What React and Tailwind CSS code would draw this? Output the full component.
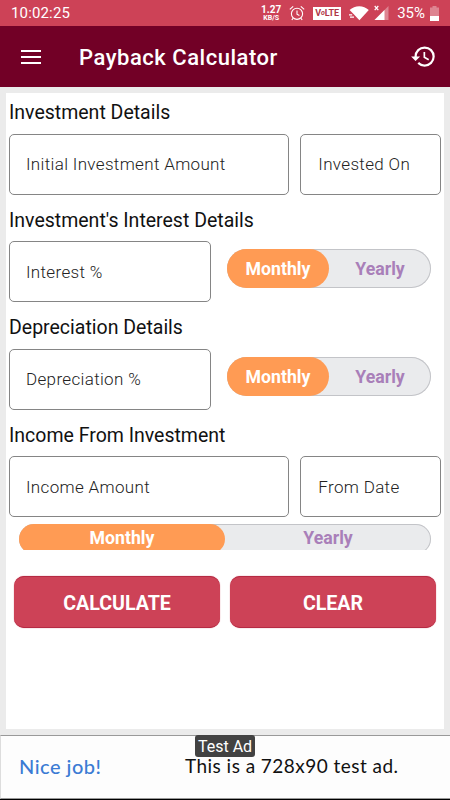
/**
 * Payback Calculator - main input screen
 */

import { useState } from 'react';

function StatusBar() {
  return (
    <div className="flex h-[26px] shrink-0 items-center bg-[#cd4257] pl-[11px] pr-[11px] text-white">
      <span className="text-[15px] leading-none tracking-[0.15px]">10:02:25</span>
      <div className="ml-auto flex items-center">
        <div className="mr-px flex w-[22px] flex-col items-center font-bold">
          <span className="text-[10px] leading-[10px]">1.27</span>
          <span className="text-[7px] leading-[7px]">KB/S</span>
        </div>
        {/* Alarm */}
        <svg className="ml-[6px] h-[16px] w-[16px]" viewBox="0 0 16 16" fill="none" stroke="currentColor">
          <circle cx="8" cy="8.8" r="5.6" strokeWidth="1.1" />
          <path d="M8 5.600v3.600l2.400 1.400M.800 4.400 4.200 1.400M15.200 4.400l-3.400-3M4 13.400l-1.200 1.600M12 13.400l1.200 1.600" strokeWidth="1.1" />
        </svg>
        <div className="ml-[8px] flex h-[13px] w-[28px] items-center justify-center bg-white text-[9px] font-bold leading-none tracking-[-0.1px] text-[#b03548]">
          <span>V</span>
          <span className="text-[7px] italic">o</span>
          <span>LTE</span>
        </div>
        {/* Wifi */}
        <svg className="ml-[8px] h-[16px] w-[20px]" viewBox="0 0 20 16" fill="currentColor">
          <path d="M.600 5C5.800-.100 14.600-.100 19.800 5L10.400 15.200 4.800 9.200Z" />
          <path d="M0 9.200h3.200v1.200H0zM1 11.600h4v1.200H1z" />
        </svg>
        {/* Mobile signal */}
        <svg className="ml-[5px] h-[16px] w-[15px]" viewBox="0 0 15 16" fill="currentColor">
          <path d="M14.500 1v14H.500Z" opacity=".35" />
          <path d="M10.500 5v10H.500Z" />
          <path d="M.700 1l3.600 4.200M4.300 1 .700 5.200" stroke="currentColor" strokeWidth="1.2" />
        </svg>
        <span className="ml-[8px] text-[15px] leading-none">35%</span>
        {/* Battery */}
        <svg className="ml-[5px] h-[15px] w-[9px]" viewBox="0 0 9 15" fill="currentColor">
          <path d="M2.500 0h4v1.500H9V15H0V1.500h2.500z" opacity=".35" />
          <path d="M0 10h9v5H0z" />
        </svg>
      </div>
    </div>
  );
}

function AppBar() {
  return (
    <header className="flex h-[61px] shrink-0 items-center bg-[#720026] pl-[21px] pr-[13px] text-white">
      <button aria-label="Open menu">
        <svg className="h-[14px] w-[20px]" viewBox="0 0 20 14" fill="currentColor">
          <path d="M0 0h20v2H0zM0 6h20v2H0zM0 12h20v2H0z" />
        </svg>
      </button>
      <h1 className="ml-[38px] pt-[3px] text-[22px] font-medium leading-none tracking-[0.53px]">Payback Calculator</h1>
      <button aria-label="History" className="ml-auto">
        <svg className="h-[27px] w-[27px]" viewBox="0 0 24 24" fill="currentColor">
          <path d="M13 3a9 9 0 0 0-9 9H1l3.890 3.890.070.140L9 12H6c0-3.870 3.130-7 7-7s7 3.130 7 7-3.130 7-7 7c-1.930 0-3.680-.790-4.940-2.060l-1.420 1.420A8.954 8.954 0 0 0 13 21a9 9 0 0 0 0-18zm-1 5v5l4.280 2.540.720-1.210-3.500-2.080V8H12z" />
        </svg>
      </button>
    </header>
  );
}

function SectionTitle({ children, className = 'pb-[2px]' }) {
  return (
    <h2 className={`flex h-[41px] items-center text-[19.5px] leading-none text-[#111] ${className}`}>{children}</h2>
  );
}

function Field({ label, className }) {
  return (
    <div className={`flex h-[61px] items-center rounded-[5px] border border-[#858585] ${className}`}>
      <span className="text-[17px] font-light leading-none tracking-[0.34px] text-[#222]">{label}</span>
    </div>
  );
}

// Monthly / Yearly switch, the wide one is cut off at its lower edge
function PeriodToggle({ wide = false }) {
  const [period, setPeriod] = useState('Monthly');

  return (
    <div className={`overflow-hidden ${wide ? 'h-[26px] w-[412px]' : 'h-[39px] w-[204px]'}`}>
      <div
        className={`flex rounded-full bg-[#eaebed] shadow-[inset_0_0_0_1px_#c3c4c8] ${wide ? 'h-[30px]' : 'h-[39px]'}`}
      >
        {['Monthly', 'Yearly'].map((name) => (
          <button
            key={name}
            onClick={() => setPeriod(name)}
            className={`flex-1 rounded-full text-[17.7px] font-bold leading-none ${wide ? 'pb-px' : 'pt-[2px]'} ${
              period === name ? 'bg-[#ff9b54] text-white' : 'text-[#a97fb9]'
            }`}
          >
            {name}
          </button>
        ))}
      </div>
    </div>
  );
}

function ActionButton({ children }) {
  return (
    <button className="h-[52px] w-[206px] rounded-[10px] border-y border-[#b52a43] bg-[#cd4257] pt-[3px] text-[19.6px] font-bold leading-none text-white shadow-[0_0_1px_#cd4257]">
      {children}
    </button>
  );
}

function TestAd() {
  return (
    <footer className="shrink-0 border-b border-black">
      <div className="relative flex h-[64px] items-center border border-[#999] border-l-[#ddd] border-r-0 bg-[#fdfdfd] pb-[3px] pl-[18px] font-['Lato',sans-serif] leading-none">
        <span className="w-[166px] text-[20px] font-medium tracking-[0.5px] text-[#3b7bd4]">Nice job!</span>
        <span className="text-[19px] tracking-[0.46px] text-[#111]">This is a 728x90 test ad.</span>
        <span className="absolute left-[194px] top-[-1px] flex h-[22px] w-[60px] items-center justify-center rounded-[3px] bg-[#424242] pt-px font-['Roboto',sans-serif] text-[16px] text-white">
          Test Ad
        </span>
      </div>
    </footer>
  );
}

export default function App() {
  return (
    <div className="flex h-[800px] w-[450px] flex-col overflow-hidden bg-[#ebebeb] font-['Roboto',sans-serif]">
      <StatusBar />
      <AppBar />

      <main className="m-[6px] flex-1 bg-white px-[3px]">
        <SectionTitle>Investment Details</SectionTitle>
        <div className="flex gap-[11px]">
          <Field label="Initial Investment Amount" className="w-[281px] pl-[16px]" />
          <Field label="Invested On" className="w-[141px] pl-[17px]" />
        </div>

        <div className="mt-[5px]">
          <SectionTitle className="pb-0">Investment's Interest Details</SectionTitle>
          <div className="flex gap-[16px]">
            <Field label="Interest %" className="w-[202px] pl-[16px] pt-[2px]" />
            <div className="pt-[8px]">
              <PeriodToggle />
            </div>
          </div>
        </div>

        <div className="mt-[6px]">
          <SectionTitle className="pb-px">Depreciation Details</SectionTitle>
          <div className="flex gap-[16px]">
            <Field label="Depreciation %" className="w-[202px] pl-[16px]" />
            <div className="pt-[8px]">
              <PeriodToggle />
            </div>
          </div>
        </div>

        <div className="mt-[5px]">
          <SectionTitle className="pb-0">Income From Investment</SectionTitle>
          <div className="flex gap-[11px]">
            <Field label="Income Amount" className="w-[281px] pl-[16px] pt-[2px]" />
            <Field label="From Date" className="w-[141px] pl-[17px] pt-[2px]" />
          </div>
        </div>
        <div className="ml-[10px] mt-[7px]">
          <PeriodToggle wide />
        </div>

        <div className="ml-[5px] mt-[26px] flex gap-[10px]">
          <ActionButton>CALCULATE</ActionButton>
          <ActionButton>CLEAR</ActionButton>
        </div>
      </main>

      <TestAd />
    </div>
  );
}
